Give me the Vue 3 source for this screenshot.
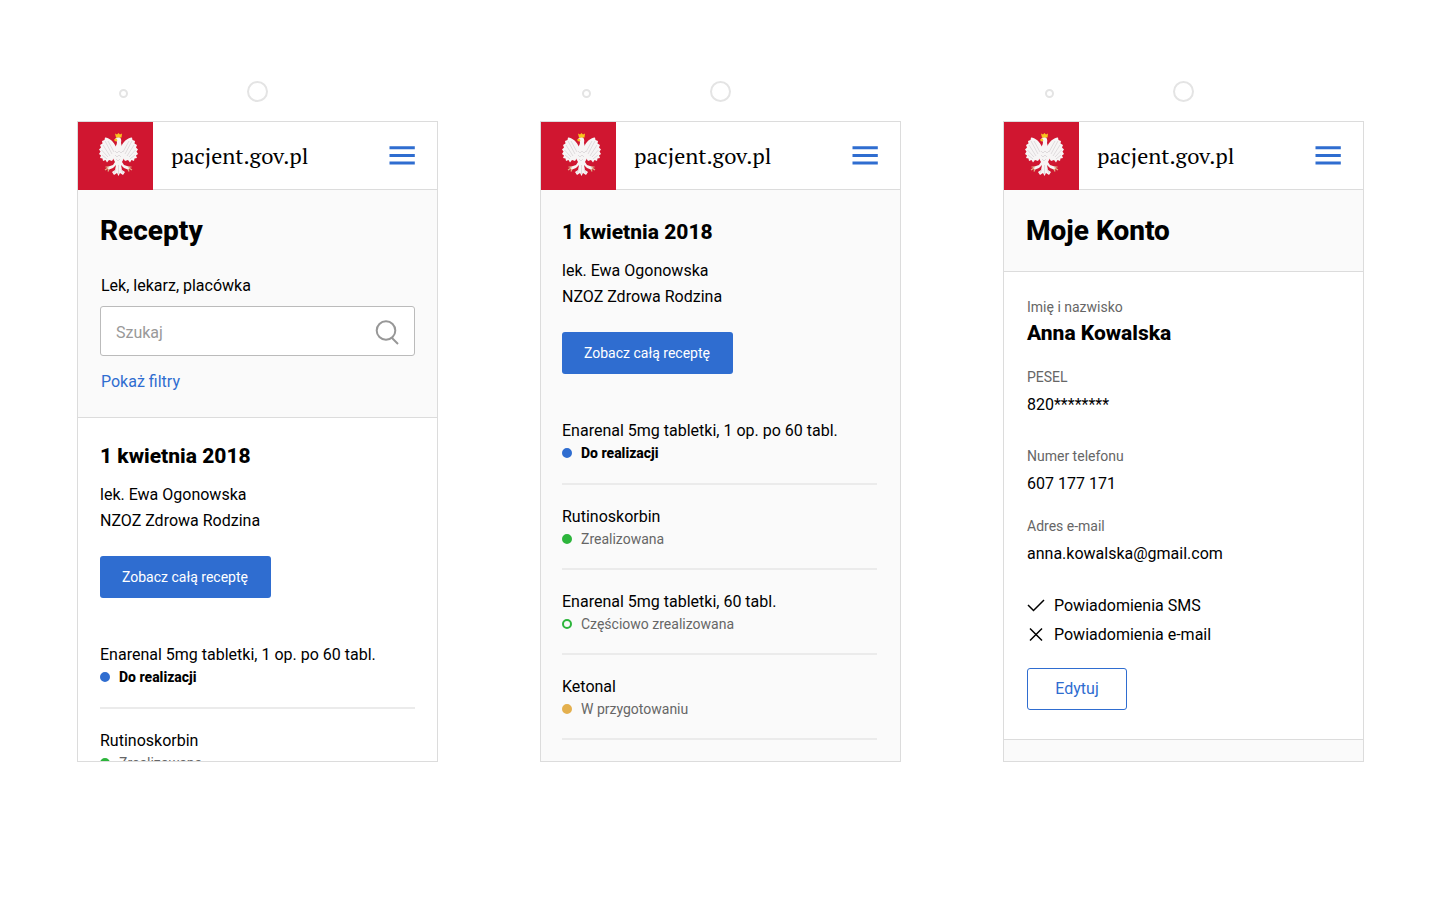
<script setup>
import { ref } from 'vue'

const search = ref('')

const drugs = [
    { name: 'Enarenal 5mg tabletki, 1 op. po 60 tabl.', status: 'Do realizacji', type: 'todo' },
    { name: 'Rutinoskorbin', status: 'Zrealizowana', type: 'done' },
    { name: 'Enarenal 5mg tabletki, 60 tabl.', status: 'Częściowo zrealizowana', type: 'partial' },
    { name: 'Ketonal', status: 'W przygotowaniu', type: 'pending' }
]

// the list screen only previews the first two drugs
const screens = [
    { id: 'list', drugs: drugs.slice(0, 2) },
    { id: 'details', drugs },
    { id: 'account' }
]

const prescription = {
    date: '1 kwietnia 2018',
    doctor: 'lek. Ewa Ogonowska',
    place: 'NZOZ Zdrowa Rodzina'
}

const account = {
    name: 'Anna Kowalska',
    pesel: '820********',
    phone: '607 177 171',
    email: 'anna.kowalska@gmail.com'
}
</script>

<template>
    <main class="board">
        <div v-for="screen in screens" :key="screen.id" class="phone">
            <div class="sensors">
                <span class="camera"></span>
                <span class="speaker"></span>
            </div>

            <section class="screen" :class="screen.id">
                <header class="header">
                    <div class="emblem">
                        <svg width="40" height="44" viewBox="0 0 40 44" aria-hidden="true">
                            <g fill="#f7f5f5">
                                <path d="M17 14 C15 9 11 5 6 4.500 L5.500 7 L3 8 L3.500 10.500 L1 12 L2 14.500 L0 16.500 L1.500 18.500 L0 21 L2 22.500 L1 25 L3.500 25.500 L4 28 L6.500 27 L8 29.500 L10 27 L13 28 L17 22 Z" />
                                <path d="M22 14 C24 9 28 5 33 4.500 L33.500 7 L36 8 L35.500 10.500 L38 12 L37 14.500 L39 16.500 L37.500 18.500 L39 21 L37 22.500 L38 25 L35.500 25.500 L35 28 L32.500 27 L31 29.500 L29 27 L26 28 L22 22 Z" />
                                <path d="M16 6 Q17 4 20 4 Q23 5 22 10 Q22 13 25 16 Q27 23 23 29 L25 32 L31 34 L30 37 L25 35 L22 32 L23 37 L26 39 L24 42 L21 40 L19.500 43 L18 40 L15 42 L13 39 L16 37 L17 32 L14 35 L9 37 L8 34 L14 32 L16 29 Q12 23 14 16 Q18 13 18 9 Z" />
                            </g>
                            <g fill="none" stroke="#cfc9cc" stroke-width="0.600">
                                <path d="M6 8 L13 21 M4 12 L11 23 M2.500 17 L9 24 M3 22 L8 26 M9 8 L15 19 M33 8 L26 21 M35 12 L28 23 M36.500 17 L30 24 M36 22 L31 26 M30 8 L24 19" />
                                <path d="M16 18 L18 20 L20 18 L22 20 L24 18 M16 22 L18 24 L20 22 L22 24 M17 26 L19 28 L21 26 M19.500 32 V41 M17 36 L15 40 M22 36 L24 40" />
                            </g>
                            <g fill="none" stroke="#e0b088" stroke-width="1.200">
                                <path d="M10 34 L6.500 34 M9 35 L6 37 M10 36 L9 38.500 M29 34 L32.500 34 M30 35 L33 37 M29 36 L30 38.500" />
                            </g>
                            <path d="M16 0.500 L18 1.500 L19.500 0 L21 1.500 L23 0.500 L22.500 4.500 H17 Z M17.500 5.500 L15 6.500 L16 8.500 L18.500 7.500 Z" fill="#f7c51e" />
                        </svg>
                    </div>
                    <div class="bar">
                        <a class="site" href="#">pacjent.gov.pl</a>
                        <button class="menu" type="button" aria-label="Menu">
                            <svg width="26" height="19" viewBox="0 0 26 19" fill="#2f6dd0">
                                <path d="M0.500 0.300 H25.800 V3.300 H0.500 Z M0.500 8 H25.800 V11 H0.500 Z M0.500 15.400 H25.800 V18.400 H0.500 Z" />
                            </svg>
                        </button>
                    </div>
                </header>

                <form v-if="screen.id === 'list'" class="intro search-form" @submit.prevent>
                    <h1>Recepty</h1>
                    <label class="search-label" for="search">Lek, lekarz, placówka</label>
                    <div class="search-box">
                        <input id="search" v-model="search" type="text" placeholder="Szukaj">
                        <button class="search-btn" type="submit" aria-label="Szukaj">
                            <svg width="24" height="26" viewBox="0 0 24 26" fill="none" stroke="#979797" stroke-width="2">
                                <circle cx="11" cy="10.500" r="9.300" />
                                <path d="M16.500 17.500 L23 24" />
                            </svg>
                        </button>
                    </div>
                    <a class="filters" href="#">Pokaż filtry</a>
                </form>

                <article v-if="screen.id !== 'account'" class="prescription">
                    <h2>{{ prescription.date }}</h2>
                    <p class="issuer">{{ prescription.doctor }}<br>{{ prescription.place }}</p>
                    <button class="btn primary" type="button">Zobacz całą receptę</button>
                    <ul class="drugs">
                        <li v-for="drug in screen.drugs" :key="drug.name">
                            <div class="drug-name">{{ drug.name }}</div>
                            <div class="status" :class="drug.type">{{ drug.status }}</div>
                        </li>
                    </ul>
                </article>

                <template v-if="screen.id === 'account'">
                    <div class="intro">
                        <h1>Moje Konto</h1>
                    </div>
                    <div class="profile">
                        <dl>
                            <dt>Imię i nazwisko</dt>
                            <dd class="full-name">{{ account.name }}</dd>
                            <dt>PESEL</dt>
                            <dd class="pesel">{{ account.pesel }}</dd>
                            <dt>Numer telefonu</dt>
                            <dd>{{ account.phone }}</dd>
                            <dt>Adres e-mail</dt>
                            <dd>{{ account.email }}</dd>
                        </dl>
                        <ul class="notices">
                            <li>
                                <svg width="18" height="16" viewBox="0 0 18 16" fill="none" stroke="#000" stroke-width="1.500">
                                    <path d="M1 7 L6.500 12.500 L17 2" />
                                </svg>
                                Powiadomienia SMS
                            </li>
                            <li>
                                <svg width="18" height="16" viewBox="0 0 18 16" fill="none" stroke="#000" stroke-width="1.500">
                                    <path d="M3 1.500 L15 13.500 M15 1.500 L3 13.500" />
                                </svg>
                                Powiadomienia e-mail
                            </li>
                        </ul>
                        <button class="btn outline" type="button">Edytuj</button>
                    </div>
                    <div class="next"></div>
                </template>
            </section>
        </div>
    </main>
</template>

<style>
body {
    margin: 0;
    background: #fff;
}
</style>

<style scoped>
*,
*::before {
    box-sizing: border-box;
}

.board {
    display: grid;
    grid-template-columns: repeat(3, minmax(0, 1fr));
    align-items: start;
    gap: 102px;
    padding: 81px 76px 81px 77px;
    font: 16px/24px Roboto, "Liberation Sans", sans-serif;
    color: #000;
}

.sensors {
    display: grid;
    grid-template-columns: 1fr auto 1fr;
    align-items: center;
    margin-bottom: 19px;
}

.sensors span {
    border: 2px solid #e4e4e4;
    border-radius: 50%;
}

.camera {
    width: 9px;
    height: 9px;
    margin: 4px 0 0 42px;
}

.speaker {
    width: 21px;
    height: 21px;
}

.screen {
    display: flex;
    flex-direction: column;
    aspect-ratio: 361 / 641;
    min-height: 0;
    overflow: hidden;
    border: 1px solid #dcdcdc;
    background: #fff;
}

.screen > * {
    flex-shrink: 0;
}

.details {
    background: #fafafa;
}

.header {
    display: flex;
    height: 68px;
    background: #fff;
}

.emblem {
    display: flex;
    align-items: center;
    justify-content: center;
    width: 75px;
    padding: 0 0 2px 7px;
    background: #d01630;
}

.bar {
    flex: 1;
    display: flex;
    align-items: center;
    justify-content: space-between;
    padding: 0 22px 0 18px;
    border-bottom: 1px solid #dcdcdc;
}

.site {
    font: 22px/32px "PT Serif", "Liberation Serif", serif;
    color: #000;
    text-decoration: none;
}

button {
    border: 0;
    padding: 0;
    background: none;
    font-family: inherit;
    cursor: pointer;
}

.menu,
.search-btn {
    display: flex;
}

h1 {
    margin: 0;
    font-size: 28px;
    line-height: 32px;
    font-weight: 800;
}

h2,
.full-name {
    margin: 0;
    font-size: 21px;
    line-height: 28px;
    font-weight: 800;
}

.intro {
    display: flex;
    flex-direction: column;
    padding: 25px 22px 24px;
    border-bottom: 1px solid #dcdcdc;
    background: #fafafa;
}

.search-form {
    padding-bottom: 23px;
}

.search-label {
    margin: 27px 0 8px;
    padding-left: 1px;
}

.search-box {
    display: flex;
    align-items: center;
    height: 50px;
    margin-bottom: 14px;
    padding: 3px 15px 0;
    border: 1px solid #bbb;
    border-radius: 3px;
    background: #fff;
}

.search-box input {
    flex: 1;
    min-width: 0;
    padding: 0;
    border: 0;
    outline: 0;
    background: none;
    font: inherit;
}

.search-box input::placeholder {
    color: #999;
}

.filters {
    align-self: flex-start;
    padding-left: 1px;
    color: #2f6dd0;
    text-decoration: none;
}

.prescription {
    padding: 24px 22px 0;
}

.details .prescription {
    padding: 28px 23px 0 21px;
}

.issuer {
    margin: 12px 0 22px;
    line-height: 26px;
}

.btn {
    display: block;
    height: 42px;
    border-radius: 3px;
}

.primary {
    padding: 0 23px 0 22px;
    background: #2f6dd0;
    color: #fff;
    font-size: 14px;
}

.outline {
    width: 100px;
    padding-bottom: 2px;
    border: 1px solid #2f6dd0;
    color: #2f6dd0;
    font-size: 16px;
}

ul {
    margin: 0;
    padding: 0;
    list-style: none;
}

.drugs {
    margin-top: 45px;
}

.drugs li {
    padding-bottom: 20px;
    border-bottom: 2px solid #ebebeb;
}

.drugs li + li {
    padding: 20px 0 19px;
}

.status {
    display: flex;
    align-items: center;
    gap: 9px;
    font-size: 14px;
    line-height: 20px;
    color: #666;
}

.status::before {
    content: "";
    width: 10px;
    height: 10px;
    border: 2px solid currentColor;
    border-radius: 50%;
}

.todo {
    color: #000;
    font-weight: 800;
}

.todo::before {
    border-color: #2f6dd0;
    background: #2f6dd0;
}

.done::before {
    border-color: #2db53c;
    background: #2db53c;
}

.partial::before {
    border-color: #2db53c;
}

.pending::before {
    border-color: #e4b04e;
    background: #e4b04e;
}

.profile {
    padding: 25px 23px 29px;
    border-bottom: 1px solid #dcdcdc;
}

dl {
    margin: 0;
}

dt {
    font-size: 14px;
    line-height: 20px;
    color: #666;
}

dd {
    margin: 6px 0 20px;
}

.full-name {
    margin: 2px 0 20px;
}

.pesel {
    margin-bottom: 29px;
}

.notices {
    margin: 28px 0 21px;
}

.notices li {
    display: flex;
    align-items: center;
    gap: 9px;
}

.notices li + li {
    margin-top: 5px;
}

.next {
    flex: 1;
    background: #fafafa;
}
</style>
